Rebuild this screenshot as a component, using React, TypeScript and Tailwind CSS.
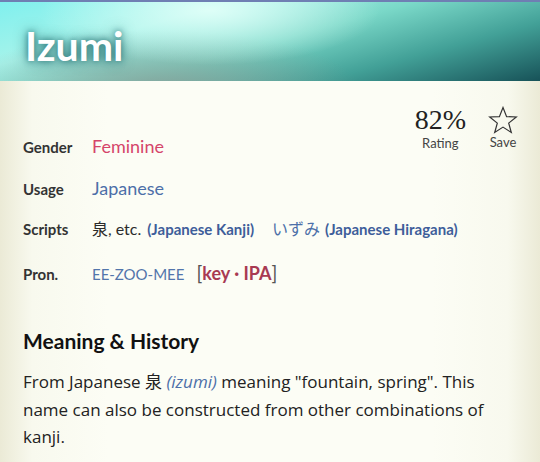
import React from 'react';

const Star = () => (
    <svg width="30" height="28" viewBox="0 0 30 28" fill="none">
        <polygon
            points="15,1.5 18.6,10.6 28.3,11 20.7,17.1 23.3,26.5 15,21.1 6.7,26.5 9.3,17.1 1.7,11 11.4,10.6"
            stroke="#333"
            strokeWidth="1.2"
            strokeLinejoin="miter"
        />
    </svg>
);

const Row = ({label, children}: {label: string; children: React.ReactNode}) => (
    <div className="flex items-baseline h-[42px]">
        <div className="w-[69px] shrink-0 text-[15px] font-bold text-[#333]">{label}</div>
        <div className="flex items-baseline whitespace-nowrap">{children}</div>
    </div>
);

export default function App() {
    return (
        <div className="w-[540px] h-[462px] overflow-hidden font-['Lato','Noto_Sans_CJK_JP',sans-serif] bg-[linear-gradient(to_right,#ebead6,#f8f9ee_6%,#fcfdf5_20%,#fcfdf5_80%,#f8f9ee_94%,#ebead6)]">
            {/* header */}
            <div className="h-[81px] border-t-2 border-[#6f7fb3] flex items-end pl-[25px] pb-[15px] bg-[radial-gradient(ellipse_170px_55px_at_210px_8px,rgba(225,255,248,0.95),rgba(225,255,248,0)),radial-gradient(ellipse_200px_60px_at_160px_88px,rgba(140,155,148,0.8),rgba(140,155,148,0)),linear-gradient(165deg,#80f0ee_0%,#a6f3ea_28%,#7ad8c8_50%,#42a097_74%,#175258_100%)]">
                <h1 className="text-[41px] font-bold text-white leading-none [text-shadow:0_0_6px_#2d7a7c,0_0_14px_#2d7a7c]">Izumi</h1>
            </div>

            <div className="pl-[23px] pr-[22px]">
                <div className="float-right flex gap-[22px] pt-[24px]">
                    <div className="flex flex-col items-center">
                        <span className="text-[28px] leading-[30px] text-[#222] font-['Liberation_Serif',serif]">82%</span>
                        <span className="text-[13px] leading-[16px] text-[#444]">Rating</span>
                    </div>
                    <div className="flex flex-col items-center pt-[1px]">
                        <Star />
                        <span className="text-[13px] leading-[17px] text-[#444]">Save</span>
                    </div>
                </div>
                <div className="pt-[52px]">
                    <Row label="Gender">
                        <span className="text-[18px] text-[#d5456a]">Feminine</span>
                    </Row>
                    <Row label="Usage">
                        <span className="text-[18px] text-[#4c6fa8]">Japanese</span>
                    </Row>
                    <Row label="Scripts">
                        <span className="text-[16px] text-[#2b2b2b]">泉, etc.</span>
                        <span className="ml-[6px] text-[15px] font-bold text-[#3e5e9a]">(Japanese Kanji)</span>
                        <span className="ml-[18px] text-[16px] text-[#4c6fa8]">いずみ</span>
                        <span className="ml-[5px] text-[15px] font-bold text-[#3e5e9a]">(Japanese Hiragana)</span>
                    </Row>
                    <Row label="Pron.">
                        <span className="text-[15px] text-[#5275ab]">EE-ZOO-MEE</span>
                        <span className="ml-[12px] text-[19px] text-[#555]">[</span>
                        <span className="text-[18px] font-bold text-[#a83a52]">key · IPA</span>
                        <span className="text-[19px] text-[#555]">]</span>
                    </Row>
                </div>
            </div>

            <div className="pl-[23px] pr-[24px] pt-[25px]">
                <h2 className="text-[21px] font-bold text-[#111] leading-[30px]">Meaning &amp; History</h2>
                <p className="mt-[12px] text-[17px] leading-[27.5px] text-[#222] font-['Open_Sans','Noto_Sans_CJK_JP',sans-serif]">
                    From Japanese 泉 <span className="italic text-[#4c6fa8]">(izumi)</span> meaning "fountain, spring". This name can also be constructed from other combinations of kanji.
                </p>
            </div>
        </div>
    );
}
